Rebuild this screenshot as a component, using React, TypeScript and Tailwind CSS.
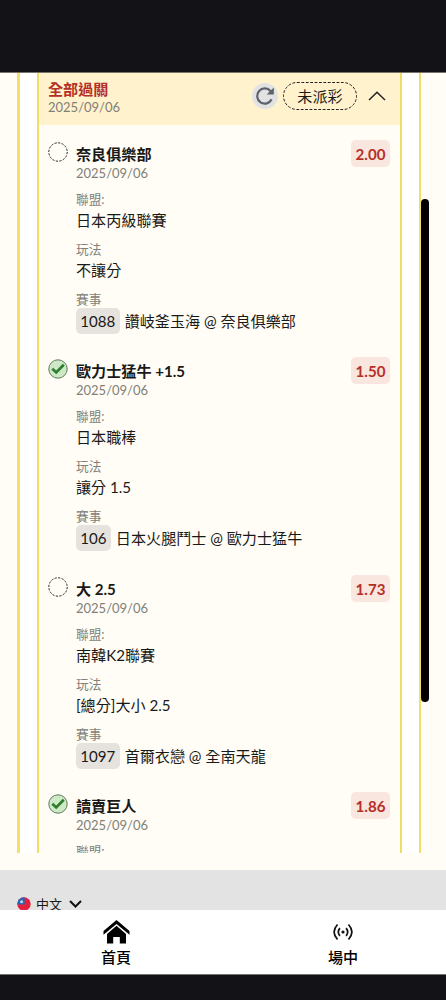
type Leg = {
    title: string
    date: string
    odds: string
    won: boolean
    league?: string
    play?: string
    gameNo?: string
    game?: string
}

const legs: Leg[] = [
    { title: '奈良俱樂部', date: '2025/09/06', odds: '2.00', won: false, league: '日本丙級聯賽', play: '不讓分', gameNo: '1088', game: '讚岐釜玉海 @ 奈良俱樂部' },
    { title: '歐力士猛牛 +1.5', date: '2025/09/06', odds: '1.50', won: true, league: '日本職棒', play: '讓分 1.5', gameNo: '106', game: '日本火腿鬥士 @ 歐力士猛牛' },
    { title: '大 2.5', date: '2025/09/06', odds: '1.73', won: false, league: '南韓K2聯賽', play: '[總分]大小 2.5', gameNo: '1097', game: '首爾衣戀 @ 全南天龍' },
    { title: '讀賣巨人', date: '2025/09/06', odds: '1.86', won: true },
]

function StatusIcon({ won }: { won: boolean }) {
    if (!won) {
        return (
            <svg className="h-5 w-5" viewBox="0 0 20 20" fill="none">
                <circle cx="10" cy="10" r="9.2" stroke="#222" strokeWidth="1" strokeDasharray="2.2 1.4" />
            </svg>
        )
    }
    return (
        <svg className="h-5 w-5" viewBox="0 0 20 20" fill="none">
            <circle cx="10" cy="10" r="9.2" fill="#cde9c5" stroke="#5f7a5b" strokeWidth="1" />
            <path d="M4.3 9.8 8.2 13.4 15.8 5.8" stroke="#2f7d2e" strokeWidth="2.7" />
        </svg>
    )
}

function Field({ label, value }: { label: string; value?: string }) {
    return (
        <div className="mb-[9px]">
            <div className="h-[17px] text-[12.7px] leading-[17px] text-[#817f79]">{label}</div>
            {value && <div className="h-6 text-[15.1px] leading-6">{value}</div>}
        </div>
    )
}

function LegItem({ leg }: { leg: Leg }) {
    return (
        <div className="flex h-[217.3px] shrink-0 pr-[10px] pl-[9px]">
            <div className="-mt-[3px] w-7 shrink-0">
                <StatusIcon won={leg.won} />
            </div>
            <div className="min-w-0 flex-1 whitespace-nowrap">
                <div className="h-5 text-[15.1px] leading-[19px] font-bold">{leg.title}</div>
                <div className="mb-2 h-[18px] text-[13px] leading-[17px] text-[#817f79]">{leg.date}</div>
                <Field label="聯盟:" value={leg.league} />
                {leg.play && <Field label="玩法" value={leg.play} />}
                {leg.game && (
                    <>
                        <div className="h-[17px] text-[12.7px] leading-[17px] text-[#817f79]">賽事</div>
                        <div className="flex h-[26px] items-center text-[15.1px]">
                            <span className="mr-[5px] rounded-[5px] bg-[#e6e3de] px-[4.3px] leading-[26px]">{leg.gameNo}</span>
                            <span className="leading-[26px]">{leg.game}</span>
                        </div>
                    </>
                )}
            </div>
            <div className="-mt-[5px] h-[27px] w-[39px] shrink-0 rounded-[5px] bg-[#f8e6df] text-center text-[15.1px] leading-[28px] font-bold text-[#b62f27]">
                {leg.odds}
            </div>
        </div>
    )
}

function TicketHeader() {
    return (
        <div className="flex h-[52px] shrink-0 items-start bg-[#fff2cc] pr-[14px] pl-[9px]">
            <div className="flex-1 pt-[6px]">
                <div className="h-5 text-[15.1px] leading-5 font-bold text-[#b62f27]">全部過關</div>
                <div className="h-[18px] text-[13px] leading-[17px] text-[#817f79]">2025/09/06</div>
            </div>
            <div className="flex h-[45px] items-center">
                <div className="flex h-[26px] w-[26px] items-center justify-center rounded-full bg-[#e2e2e2]">
                    <svg className="h-5 w-5" viewBox="0 0 20 20" fill="none">
                        <path d="M16.6 13.3A7.6 7.6 0 1 1 15.6 5.2" stroke="#5c626b" strokeWidth="2.2" />
                        <path d="M18.8 1.5V8.4H11.7Z" fill="#5c626b" />
                    </svg>
                </div>
                <div className="relative ml-[5px] h-7 w-[74px] text-center text-[15.1px] leading-7">
                    <svg className="absolute inset-0" width="74" height="28" fill="none">
                        <rect x=".5" y=".5" width="73" height="27" rx="13.5" stroke="#222" strokeDasharray="2.8 1.6" />
                    </svg>
                    未派彩
                </div>
                <svg className="ml-[11px] h-[10px] w-[18px]" viewBox="0 0 18 10" fill="none">
                    <path d="M1 9 9 1.3 17 9" stroke="#222" strokeWidth="1.5" />
                </svg>
            </div>
        </div>
    )
}

function FlagIcon() {
    return (
        <svg className="h-[14px] w-[14px]" viewBox="0 0 14 14">
            <circle cx="7" cy="7" r="6.7" fill="#e5203c" />
            <path d="M.3 7.6A6.7 6.7 0 0 1 7.6.3V7.6Z" fill="#2865b5" />
            <circle cx="4.6" cy="4.7" r="1.5" fill="#b9d8f1" />
        </svg>
    )
}

function HomeIcon() {
    return (
        <svg className="h-6 w-[27px]" viewBox="0 0 27 24">
            <path d="M.5 11 13.5 0l13 11v3.8L13.5 4 .5 14.8Z" />
            <path d="M4 13.9 13.5 5.8 23 13.9V23.5h-6.2V17h-6.6v6.5H4Z" />
        </svg>
    )
}

function LiveIcon() {
    return (
        <svg className="h-[18px] w-5" viewBox="0 0 20 18" fill="none" stroke="#111" strokeWidth="1.7">
            <circle cx="10" cy="9" r="1.6" fill="#111" stroke="none" />
            <path d="M6.9 5.1Q3.7 9 6.9 12.9M13.1 5.1Q16.3 9 13.1 12.9" />
            <path d="M4.5 1.5Q-2.3 9 4.5 16.5M15.5 1.5Q22.3 9 15.5 16.5" />
        </svg>
    )
}

export default function App() {
    return (
        <div className="relative flex h-[1000px] w-[446px] flex-col overflow-hidden bg-[#121217] font-['Lato','Noto_Sans_CJK_TC',sans-serif] text-[#191919]">
            <div className="h-[73px] shrink-0 border-b border-[#77746b]" />

            <main className="h-[797px] shrink-0 bg-[#fffdf5] pr-[25px] pl-[17px]">
                <div className="h-[780px] border-r-2 border-l-[3px] border-[#f3df68] bg-white px-[17px]">
                    <div className="flex h-full flex-col overflow-hidden border-x-2 border-[#f3dc62] bg-[#fffdf5]">
                        <TicketHeader />
                        <div className="flex min-h-0 flex-1 flex-col overflow-hidden pt-5">
                            {legs.map((leg) => (
                                <LegItem key={leg.title} leg={leg} />
                            ))}
                        </div>
                    </div>
                </div>
            </main>

            <footer className="h-10 shrink-0 overflow-hidden bg-[#e3e3e3] pt-[24px] pl-[17px]">
                <div className="flex h-5 items-center text-[13px] leading-5">
                    <FlagIcon />
                    <span className="ml-[5px]">中文</span>
                    <svg className="ml-[7px] h-2 w-[13px]" viewBox="0 0 13 8" fill="none">
                        <path d="M1 1 6.5 6.5 12 1" stroke="#111" strokeWidth="2" />
                    </svg>
                </div>
            </footer>

            <nav className="flex h-[65px] shrink-0 justify-between border-b border-[#77746b] bg-white pr-[73px] pl-[86px] text-[15.1px] text-black">
                <a className="flex w-[60px] flex-col items-center pt-[10px]">
                    <HomeIcon />
                    <span className="mt-[3px] leading-5 font-medium">首頁</span>
                </a>
                <a className="flex w-[60px] flex-col items-center pt-[13px]">
                    <LiveIcon />
                    <span className="mt-[6px] leading-5 font-medium">場中</span>
                </a>
            </nav>

            {/* scroll thumb */}
            <div className="absolute top-[199px] left-[421px] h-[503px] w-2 rounded-full bg-black" />
        </div>
    )
}
